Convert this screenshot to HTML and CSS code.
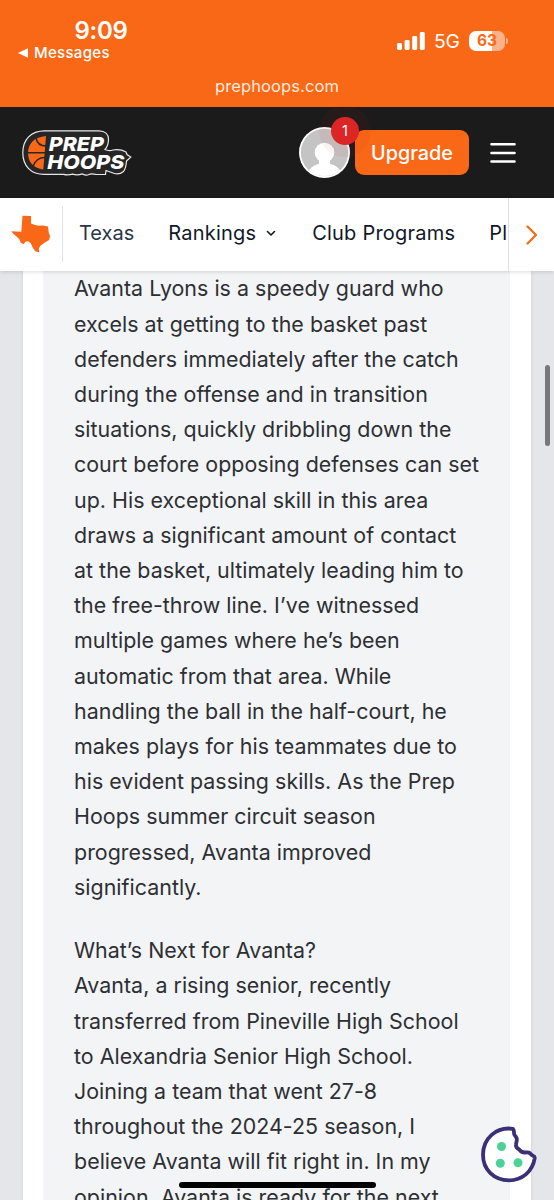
FILE: index.html
```html
<!DOCTYPE html>
<html lang="en">
<head>
  <meta charset="UTF-8" />
  <title>Prep Hoops Texas</title>
  <meta name="viewport" content="width=device-width, initial-scale=1.0" />
  <link rel="stylesheet" href="styles.css">
</head>
<body>
  <div class="screen">
    <div class="status-bar">
      <div class="status-left">
        <div class="time">9:09</div>
        <div class="back-app">
          <svg width="11" height="10" viewBox="0 0 11 10"><path d="M0 5 10 .3v9.4z" fill="#fff" /></svg>
          <span>Messages</span>
        </div>
      </div>
      <div class="status-right">
        <svg width="28" height="19" viewBox="0 0 28 19" fill="#fff">
          <rect x="0" y="11" width="5" height="7" rx="1.4" />
          <rect x="7.6" y="8" width="5" height="10" rx="1.4" />
          <rect x="15.2" y="4" width="5" height="14" rx="1.4" />
          <rect x="22.8" y="0" width="5" height="18" rx="1.4" />
        </svg>
        <span class="network">5G</span>
        <span class="battery">63</span>
      </div>
      <div class="address">prephoops.com</div>
    </div>

    <header class="site-header">
      <svg class="logo" width="110" height="46" viewBox="0 0 110 46">
        <path d="M22.500.8H77c6 0 9.500 3.500 9.500 8.500 0 4.500-1.500 8-3.500 10.200 2.500 1.200 5 1.500 8 .5 5-.8 9-.3 13 2l1 2.500 3.800 2.500-4.300 4c-.3 5-1 8-3 10.500-3 2.500-6.500 3.200-10.500 1.500l-7-2.500-.5 4H74c-3-.8-5-1-7 0-2 1-4 1-6.500-.6-4 1.300-7 1.300-10 .2-3 1-6 1-9 .3h-19C9 44.500.8 36 .8 22.800S9 .8 22.500.8z" fill="#262626" stroke="#e8e8e8" stroke-width="1.2" />
        <path d="M24 6 21.300 39.500C11 38 6 32 6 22.800S12.500 7 24 6z" fill="#f96816" />
        <path d="M6 22.800h18M14 8c1 5 4 8 10 8M11 36.500c2-6 6-9 12-9" fill="none" stroke="#262626" stroke-width="1.500" />
        <text x="26.800" y="20.500" class="logo-text" textLength="55" lengthAdjust="spacingAndGlyphs">PREP</text>
        <text x="25.300" y="38.900" class="logo-text" textLength="77" lengthAdjust="spacingAndGlyphs">HOOPS</text>
      </svg>
      <div class="header-actions">
        <div class="avatar">
          <svg width="51" height="51" viewBox="0 0 51 51">
            <circle cx="25.500" cy="25.500" r="25.500" fill="#fff" />
            <circle cx="25.500" cy="25.500" r="23.700" fill="#c4c4c4" />
            <circle cx="25.500" cy="25.500" r="9.800" fill="#fff" />
            <path d="M10 43.500c2.500-4 7-6.500 11-6.800h9c4 .3 8.500 2.800 11 6.800a24.500 24.500 0 0 1-31 0z" fill="#fff" />
            <path d="M20 33h11v6H20z" fill="#fff" />
          </svg>
          <span class="badge">1</span>
        </div>
        <button class="upgrade">Upgrade</button>
        <svg class="menu" width="26" height="22" viewBox="0 0 26 22" stroke="#fff" stroke-width="2.600" stroke-linecap="round">
          <path d="M1.500 2.300h23M1.500 11h23M1.500 19.500h23" />
        </svg>
      </div>
    </header>

    <nav class="site-nav">
      <div class="state">
        <svg width="40" height="38" viewBox="0 0 40 38">
          <path d="M11.500.8 20 1v7.500l4 1.500 4 .8 4-.4 5 1 .8 6.500 1.300 3-1 4-5 3-4 3-1.300 3 .5 3.500-4-1.200-2.500-3.500-2-4.500-2.500-2-3 .5-1.500 2.500-3-1.500-1.500-3.500-3-3-3-2.500-2-2.500 10 .6z" fill="#f96816" />
        </svg>
      </div>
      <div class="nav-links">
        <a class="active">Texas</a>
        <a>Rankings
          <svg width="10" height="7" viewBox="0 0 10 7" fill="none" stroke="#111827" stroke-width="1.600" stroke-linecap="round" stroke-linejoin="round"><path d="m1.500 1.500 3.500 3.500 3.500-3.500" /></svg>
        </a>
        <a>Club Programs</a>
        <a>Pl</a>
      </div>
      <div class="nav-next">
        <svg width="12" height="20" viewBox="0 0 12 20" fill="none" stroke="#f96816" stroke-width="2.200" stroke-linecap="round" stroke-linejoin="round"><path d="m1.500 1.500 8.500 8.500-8.500 8.500" /></svg>
      </div>
    </nav>

    <main class="page">
      <article class="card">
        <div class="report">
          <p>
            Avanta Lyons is a speedy guard who<br>
            excels at getting to the basket past<br>
            defenders immediately after the catch<br>
            during the offense and in transition<br>
            situations, quickly dribbling down the<br>
            court before opposing defenses can set<br>
            up. His exceptional skill in this area<br>
            draws a significant amount of contact<br>
            at the basket, ultimately leading him to<br>
            the free-throw line. I’ve witnessed<br>
            multiple games where he’s been<br>
            automatic from that area. While<br>
            handling the ball in the half-court, he<br>
            makes plays for his teammates due to<br>
            his evident passing skills. As the Prep<br>
            Hoops summer circuit season<br>
            progressed, Avanta improved<br>
            significantly.
          </p>
          <p>
            What’s Next for Avanta?<br>
            Avanta, a rising senior, recently<br>
            transferred from Pineville High School<br>
            to Alexandria Senior High School.<br>
            Joining a team that went 27-8<br>
            throughout the 2024-25 season, I<br>
            believe Avanta will fit right in. In my<br>
            opinion, Avanta is ready for the next
          </p>
        </div>
      </article>
    </main>

    <div class="scrollbar"></div>
    <svg class="cookie" width="60" height="60" viewBox="0 0 60 60">
      <path d="M33 3.800C16 1.500 3 13.500 3 29.800c0 15 11 25.500 26 25.500 13 0 23.500-8.500 25.700-22 .2-1.500-.5-2-1.700-2.500-1.500-.5-2-1.500-3-2.500-1.500-1.300-3-.8-4.500-.8-3 .2-5-1-6.300-3-2.200-1-3.500-2.700-3.200-5 .2-2 1-3.500.8-5.500-.2-2.200-1.800-3-2.500-4.500-.6-1.500.3-3.500-1.300-5.700z" fill="#fff" stroke="#3b2f78" stroke-width="3.800" stroke-linejoin="round" />
      <circle cx="21.500" cy="21.500" r="4.500" fill="#4cd296" />
      <circle cx="20.300" cy="38.300" r="4.500" fill="#4cd296" />
      <circle cx="38" cy="37.800" r="4.500" fill="#4cd296" />
    </svg>
    <div class="home-indicator"></div>
  </div>
</body>
</html>
```
FILE: styles.css
```css
* {
  margin: 0;
  padding: 0;
  box-sizing: border-box;
}

body {
  font-family: Inter, "Liberation Sans", sans-serif;
  background: #e5e6ea;
}

.screen {
  position: relative;
  display: flex;
  flex-direction: column;
  width: 554px;
  height: 1200px;
  overflow: hidden;
}

/* phone status bar */
.status-bar {
  display: grid;
  grid-template-columns: 1fr 1fr;
  grid-template-rows: 76px 31px;
  height: 107px;
  flex-shrink: 0;
  background: #f96816;
  color: #fff;
}

.status-left {
  padding: 17px 0 0 18px;
}

.time {
  width: 166px;
  text-align: center;
  font-size: 24px;
  font-weight: 600;
  line-height: 28px;
  letter-spacing: -0.3px;
}

.back-app {
  display: flex;
  align-items: center;
  gap: 5px;
  font-size: 15px;
  font-weight: 500;
  line-height: 15px;
  letter-spacing: 0.3px;
}

.status-right {
  display: flex;
  align-items: center;
  justify-content: flex-end;
  gap: 9px;
  height: 24px;
  margin-top: 29px;
  padding-right: 49px;
}

.network {
  font-size: 19.3px;
}

.battery {
  position: relative;
  width: 36px;
  height: 20px;
  border-radius: 7px;
  background: linear-gradient(to right, #fff 63%, #fcb389 63%);
  color: #f96816;
  font-size: 15.5px;
  font-weight: 700;
  line-height: 20px;
  text-align: center;
}

.battery::after {
  content: "";
  position: absolute;
  right: -3px;
  top: 7px;
  width: 2px;
  height: 6px;
  border-radius: 0 2px 2px 0;
  background: #fcb389;
}

.address {
  grid-column: 1 / 3;
  text-align: center;
  font-size: 16.5px;
  line-height: 21px;
  color: #ffebdd;
  letter-spacing: 0.1px;
}

/* site header */
.site-header {
  display: flex;
  align-items: center;
  justify-content: space-between;
  height: 91px;
  flex-shrink: 0;
  padding: 0 38px 0 22px;
  background: #1b1b1b;
}

.logo-text {
  font-family: Inter, "Liberation Sans", sans-serif;
  font-size: 19.3px;
  font-weight: 800;
  font-style: italic;
  fill: #fff;
}

.header-actions {
  display: flex;
  align-items: center;
}

.avatar {
  position: relative;
  height: 51px;
  margin-right: 5px;
}

.badge {
  position: absolute;
  top: -10px;
  left: 32px;
  width: 28px;
  height: 28px;
  border-radius: 50%;
  background: #dc2626;
  box-shadow: 0 0 0 12px rgba(220, 38, 38, 0.06);
  color: #fff;
  font-size: 14.5px;
  line-height: 28px;
  text-align: center;
  z-index: 1;
}

.upgrade {
  width: 114px;
  height: 45px;
  margin-right: 21px;
  border: none;
  border-radius: 9px;
  background: #f96816;
  color: #fff;
  font-family: inherit;
  font-size: 19.8px;
  font-weight: 500;
}

/* state navigation */
.site-nav {
  position: relative;
  display: flex;
  height: 73px;
  flex-shrink: 0;
  background: #fff;
  box-shadow: 0 1px 4px rgba(0, 0, 0, 0.14);
}

.state {
  display: flex;
  align-items: center;
  width: 63px;
  height: 56px;
  margin-top: 8px;
  padding-left: 11px;
  border-right: 1px solid #dfe1e5;
}

.nav-links {
  display: flex;
  flex: 1;
  gap: 34px;
  padding-left: 16px;
  overflow: hidden;
  white-space: nowrap;
  font-size: 20px;
  letter-spacing: 0.22px;
  line-height: 70px;
  color: #111827;
}

.nav-links svg {
  margin: 0 2px 0 4px;
  vertical-align: 3px;
}

.nav-links .active {
  color: #293548;
  letter-spacing: 0;
}

.nav-next {
  display: flex;
  align-items: center;
  width: 46px;
  padding-left: 17px;
  border-left: 1px solid #dfe1e5;
}

/* article */
.page {
  flex: 1;
  min-height: 0;
  padding: 0 23px;
  overflow: hidden;
}

.card {
  padding: 0 21px 0 20px;
  background: #fff;
  box-shadow: 0 0 3px rgba(0, 0, 0, 0.1);
}

.report {
  padding: 0.4px 0 60px 31px;
  background: #f3f4f6;
  color: #2d2f33;
  font-size: 21.4px;
  letter-spacing: 0.03px;
  line-height: 35.2px;
  white-space: nowrap;
}

.report p {
  margin-bottom: 28.2px;
}

/* things floating over the page */
.scrollbar {
  position: absolute;
  top: 365px;
  right: 4px;
  width: 5px;
  height: 81px;
  border-radius: 3px;
  background: #77787b;
}

.cookie {
  position: absolute;
  top: 1125px;
  left: 480px;
}

.home-indicator {
  position: absolute;
  top: 1182px;
  left: 179px;
  width: 197px;
  height: 6px;
  border-radius: 3px;
  background: #000;
}
```
